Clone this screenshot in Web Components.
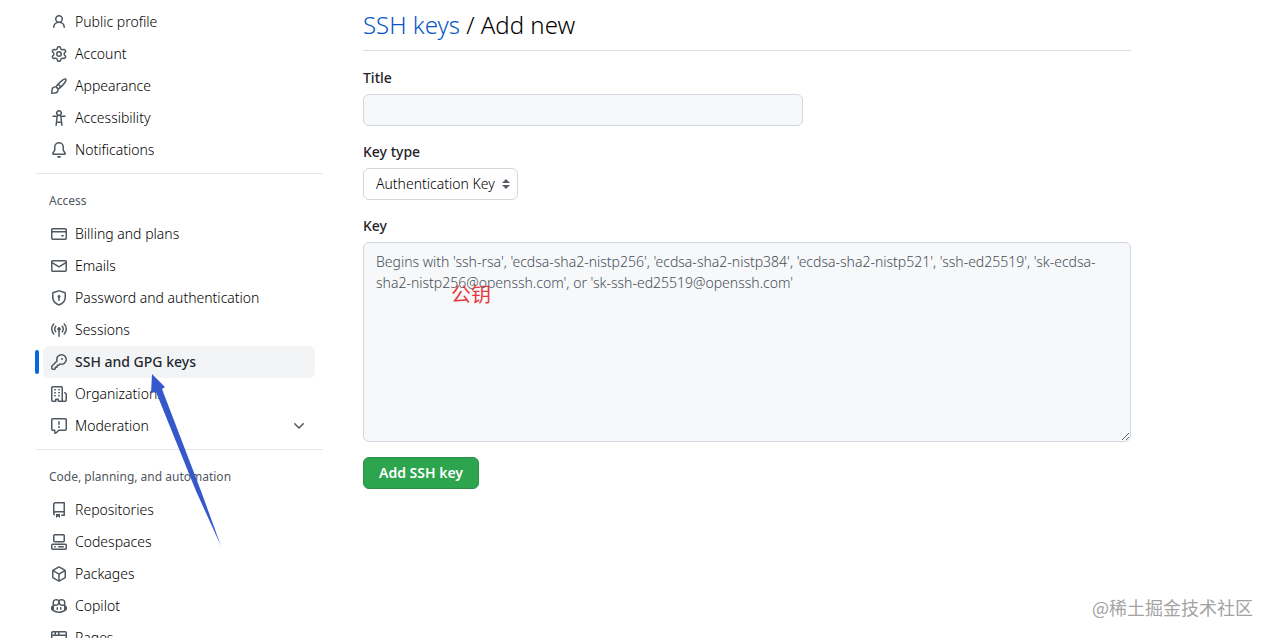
<!DOCTYPE html>
<html lang="en">
<head>
<meta charset="utf-8">
<title>Add new SSH keys</title>
<style>
  html, body { margin: 0; }
  body { background: #fff; color: #1f2328; font: 300 14px/21px "Noto Sans", "Noto Sans CJK SC", sans-serif; }
</style>
</head>
<body>
<settings-page>
  <settings-nav slot="nav">
    <nav-group>
      <nav-item icon="person">Public profile</nav-item>
      <nav-item icon="gear">Account</nav-item>
      <nav-item icon="paintbrush">Appearance</nav-item>
      <nav-item icon="accessibility">Accessibility</nav-item>
      <nav-item icon="bell">Notifications</nav-item>
    </nav-group>
    <nav-group heading="Access">
      <nav-item icon="card">Billing and plans</nav-item>
      <nav-item icon="mail">Emails</nav-item>
      <nav-item icon="shield">Password and authentication</nav-item>
      <nav-item icon="broadcast">Sessions</nav-item>
      <nav-item icon="key" current>SSH and GPG keys</nav-item>
      <nav-item icon="organization">Organizations</nav-item>
      <nav-item icon="report" expandable>Moderation</nav-item>
    </nav-group>
    <nav-group heading="Code, planning, and automation">
      <nav-item icon="repo">Repositories</nav-item>
      <nav-item icon="codespaces">Codespaces</nav-item>
      <nav-item icon="package">Packages</nav-item>
      <nav-item icon="copilot">Copilot</nav-item>
      <nav-item icon="browser">Pages</nav-item>
    </nav-group>
  </settings-nav>
  <page-heading><a href="#keys" slot="parent">SSH keys</a>Add new</page-heading>
  <key-form></key-form>
  <pointer-arrow slot="notes"></pointer-arrow>
  <red-note slot="notes">公钥</red-note>
  <water-mark slot="notes">@稀土掘金技术社区</water-mark>
</settings-page>

<script>
const ICONS = {
  person: "M10.561 8.073a6.005 6.005 0 0 1 3.432 5.142.75.75 0 1 1-1.498.07 4.5 4.5 0 0 0-8.99 0 .75.75 0 0 1-1.498-.07 6.004 6.004 0 0 1 3.431-5.142 3.999 3.999 0 1 1 5.123 0ZM10.5 5a2.5 2.5 0 1 0-5 0 2.5 2.5 0 0 0 5 0Z",
  gear: "M8 0a8.2 8.2 0 0 1 .701.031C9.444.095 9.99.645 10.16 1.29l.288 1.107c.018.066.079.158.212.224.231.114.454.243.668.386.123.082.233.09.299.071l1.103-.303c.644-.176 1.392.021 1.82.63.27.385.506.792.704 1.218.315.675.111 1.422-.364 1.891l-.814.806c-.049.048-.098.147-.088.294.016.257.016.515 0 .772-.01.147.038.246.088.294l.814.806c.475.469.679 1.216.364 1.891a7.977 7.977 0 0 1-.704 1.217c-.428.61-1.176.807-1.82.63l-1.102-.302c-.067-.019-.177-.011-.3.071a5.909 5.909 0 0 1-.668.386c-.133.066-.194.158-.211.224l-.29 1.106c-.168.646-.715 1.196-1.458 1.26a8.006 8.006 0 0 1-1.402 0c-.743-.064-1.289-.614-1.458-1.26l-.289-1.106c-.018-.066-.079-.158-.212-.224a5.738 5.738 0 0 1-.668-.386c-.123-.082-.233-.09-.299-.071l-1.103.303c-.644.176-1.392-.021-1.82-.63a8.12 8.12 0 0 1-.704-1.218c-.315-.675-.111-1.422.363-1.891l.815-.806c.05-.048.098-.147.088-.294a6.214 6.214 0 0 1 0-.772c.01-.147-.038-.246-.088-.294l-.815-.806C.635 6.045.431 5.298.746 4.623a7.92 7.92 0 0 1 .704-1.217c.428-.61 1.176-.807 1.82-.63l1.102.302c.067.019.177.011.3-.071.214-.143.437-.272.668-.386.133-.066.194-.158.211-.224l.29-1.106C6.009.645 6.556.095 7.299.03 7.53.01 7.764 0 8 0Zm-.571 1.525c-.036.003-.108.036-.137.146l-.289 1.105c-.147.561-.549.967-.998 1.189-.173.086-.34.183-.5.29-.417.278-.97.423-1.529.27l-1.103-.303c-.109-.03-.175.016-.195.045-.22.312-.412.644-.573.99-.014.031-.021.11.059.19l.815.806c.411.406.562.957.53 1.456a4.709 4.709 0 0 0 0 .582c.032.499-.119 1.05-.53 1.456l-.815.806c-.081.08-.073.159-.059.19.162.346.353.677.573.989.02.03.085.076.195.046l1.102-.303c.56-.153 1.113-.008 1.53.27.161.107.328.204.501.29.447.222.85.629.997 1.189l.289 1.105c.029.109.101.143.137.146a6.6 6.6 0 0 0 1.142 0c.036-.003.108-.036.137-.146l.289-1.105c.147-.561.549-.967.998-1.189.173-.086.34-.183.5-.29.417-.278.97-.423 1.529-.27l1.103.303c.109.029.175-.016.195-.045.22-.313.411-.644.573-.99.014-.031.021-.11-.059-.19l-.815-.806c-.411-.406-.562-.957-.53-1.456a4.709 4.709 0 0 0 0-.582c-.032-.499.119-1.05.53-1.456l.815-.806c.081-.08.073-.159.059-.19a6.464 6.464 0 0 0-.573-.989c-.02-.03-.085-.076-.195-.046l-1.102.303c-.56.153-1.113.008-1.53-.27a4.44 4.44 0 0 0-.501-.29c-.447-.222-.85-.629-.997-1.189l-.289-1.105c-.029-.11-.101-.143-.137-.146a6.6 6.6 0 0 0-1.142 0ZM11 8a3 3 0 1 1-6 0 3 3 0 0 1 6 0ZM9.5 8a1.5 1.5 0 1 0-3.001.001A1.5 1.5 0 0 0 9.5 8Z",
  paintbrush: "M11.134 1.535c.7-.509 1.416-.942 2.076-1.155.649-.21 1.463-.267 2.069.34.603.601.568 1.411.368 2.07-.202.668-.624 1.39-1.125 2.096-1.011 1.424-2.496 2.987-3.775 4.249-1.098 1.084-2.132 1.839-3.04 2.3a3.744 3.744 0 0 1-1.055 3.217c-.431.431-1.065.691-1.657.861-.614.177-1.294.287-1.914.357A21.151 21.151 0 0 1 .797 16H.743l.007-.75H.749L.742 16a.75.75 0 0 1-.743-.742l.743-.008-.742.007v-.054a21.25 21.25 0 0 1 .13-2.284c.067-.647.187-1.287.358-1.914.17-.591.43-1.226.86-1.657a3.746 3.746 0 0 1 3.227-1.054c.466-.893 1.225-1.907 2.314-2.982 1.271-1.255 2.833-2.75 4.246-3.777ZM1.62 13.089c-.051.464-.086.929-.104 1.395.466-.018.932-.053 1.396-.104a10.511 10.511 0 0 0 1.668-.309c.526-.151.856-.325 1.011-.48a2.25 2.25 0 1 0-3.182-3.182c-.155.155-.329.485-.48 1.01a10.515 10.515 0 0 0-.309 1.67Zm10.396-10.34c-1.224.89-2.605 2.189-3.822 3.384l1.718 1.718c1.21-1.205 2.51-2.597 3.387-3.833.47-.662.78-1.227.912-1.662.134-.444.032-.551.009-.575h-.001V1.78c-.014-.014-.113-.113-.548.027-.432.14-.995.462-1.655.942Zm-4.832 7.266-.001.001a9.859 9.859 0 0 0 1.63-1.142L7.155 7.216a9.7 9.7 0 0 0-1.161 1.607c.482.302.889.71 1.19 1.192Z",
  accessibility: "M9.923 5.302c.063.063.122.129.178.198H14A.75.75 0 0 1 14 7h-3.3l.578 5.163.362 2.997a.75.75 0 0 1-1.49.18L9.868 13H6.132l-.282 2.34a.75.75 0 0 1-1.49-.18l.362-2.997L5.3 7H2a.75.75 0 0 1 0-1.5h3.9a2.54 2.54 0 0 1 .176-.198 3 3 0 1 1 3.847 0ZM9.2 7.073h-.001a1.206 1.206 0 0 0-2.398 0L6.305 11.5h3.39ZM9.5 3a1.5 1.5 0 1 0-3 0 1.5 1.5 0 0 0 3 0Z",
  bell: "M8 16a2 2 0 0 0 1.985-1.75c.017-.137-.097-.25-.235-.25h-3.5c-.138 0-.252.113-.235.25A2 2 0 0 0 8 16ZM3 5a5 5 0 0 1 10 0v2.947c0 .05.015.098.042.139l1.703 2.555A1.519 1.519 0 0 1 13.482 13H2.518a1.516 1.516 0 0 1-1.263-2.36l1.703-2.554A.255.255 0 0 0 3 7.947Zm5-3.5A3.5 3.5 0 0 0 4.5 5v2.947c0 .346-.102.683-.294.97l-1.703 2.556a.017.017 0 0 0-.003.01l.001.006c0 .002.002.004.004.006l.006.004.007.001h10.964l.007-.001.006-.004.004-.006.001-.007a.017.017 0 0 0-.003-.01l-1.703-2.554a1.745 1.745 0 0 1-.294-.97V5A3.5 3.5 0 0 0 8 1.5Z",
  card: "M10.75 9a.75.75 0 0 0 0 1.5h1.5a.75.75 0 0 0 0-1.5h-1.5ZM0 3.75C0 2.784.784 2 1.75 2h12.5c.966 0 1.75.784 1.75 1.75v8.5A1.75 1.75 0 0 1 14.25 14H1.75A1.75 1.75 0 0 1 0 12.25ZM14.5 6.5h-13v5.75c0 .138.112.25.25.25h12.5a.25.25 0 0 0 .25-.25Zm0-2.75a.25.25 0 0 0-.25-.25H1.75a.25.25 0 0 0-.25.25V5h13Z",
  mail: "M1.75 2h12.5c.966 0 1.75.784 1.75 1.75v8.5A1.75 1.75 0 0 1 14.25 14H1.75A1.75 1.75 0 0 1 0 12.25v-8.5C0 2.784.784 2 1.75 2ZM1.5 12.251c0 .138.112.25.25.25h12.5a.25.25 0 0 0 .25-.25V5.809L8.38 9.397a.75.75 0 0 1-.76 0L1.5 5.809v6.442Zm13-8.181v-.32a.25.25 0 0 0-.25-.25H1.75a.25.25 0 0 0-.25.25v.32L8 7.88Z",
  shield: "m8.533.133 5.25 1.68A1.75 1.75 0 0 1 15 3.48V7c0 1.566-.32 3.182-1.303 4.682-.983 1.498-2.585 2.813-5.032 3.855a1.697 1.697 0 0 1-1.33 0c-2.447-1.042-4.049-2.357-5.032-3.855C1.32 10.182 1 8.566 1 7V3.48a1.75 1.75 0 0 1 1.217-1.667l5.25-1.68a1.748 1.748 0 0 1 1.066 0Zm-.61 1.429.001.001-5.25 1.68a.251.251 0 0 0-.174.237V7c0 1.36.275 2.666 1.057 3.859.784 1.194 2.121 2.342 4.366 3.298a.196.196 0 0 0 .154 0c2.245-.957 3.582-2.103 4.366-3.297C13.225 9.666 13.5 8.358 13.5 7V3.48a.25.25 0 0 0-.174-.238l-5.25-1.68a.25.25 0 0 0-.153 0ZM9.5 6.5c0 .536-.286 1.032-.75 1.3v2.45a.75.75 0 0 1-1.5 0V7.8A1.5 1.5 0 1 1 9.5 6.5Z",
  broadcast: "M8.75 8.582v5.668a.75.75 0 0 1-1.5 0V8.582a1.75 1.75 0 1 1 1.5 0Zm3.983-7.125a.75.75 0 0 1 1.06.026A7.976 7.976 0 0 1 16 7c0 2.139-.84 4.083-2.207 5.517a.75.75 0 1 1-1.086-1.034A6.474 6.474 0 0 0 14.5 7a6.474 6.474 0 0 0-1.793-4.483.75.75 0 0 1 .026-1.06Zm-9.466 0c.3.286.312.76.026 1.06A6.474 6.474 0 0 0 1.5 7a6.47 6.47 0 0 0 1.793 4.483.75.75 0 0 1-1.086 1.034A7.973 7.973 0 0 1 0 7c0-2.139.84-4.083 2.207-5.517a.75.75 0 0 1 1.06-.026Zm8.556 2.321A4.988 4.988 0 0 1 13 7a4.988 4.988 0 0 1-1.177 3.222.75.75 0 1 1-1.146-.967A3.487 3.487 0 0 0 11.5 7c0-.86-.309-1.645-.823-2.255a.75.75 0 0 1 1.146-.967Zm-6.492.958A3.48 3.48 0 0 0 4.5 7a3.48 3.48 0 0 0 .823 2.255.75.75 0 0 1-1.146.967A4.981 4.981 0 0 1 3 7a4.982 4.982 0 0 1 1.188-3.236.75.75 0 1 1 1.143.972Z",
  key: "M10.5 0a5.499 5.499 0 1 1-1.288 10.848l-.932.932a.749.749 0 0 1-.53.22H7v.75a.749.749 0 0 1-.22.53l-.5.5a.749.749 0 0 1-.53.22H5v.75a.749.749 0 0 1-.22.53l-.5.5a.749.749 0 0 1-.53.22h-2A1.75 1.75 0 0 1 0 14.25v-2c0-.199.079-.389.22-.53l4.932-4.932A5.5 5.5 0 0 1 10.5 0Zm-4 5.5c-.001.431.069.86.205 1.269a.75.75 0 0 1-.181.768L1.5 12.56v1.69c0 .138.112.25.25.25h1.69l.06-.06v-1.19a.75.75 0 0 1 .75-.75h1.19l.06-.06v-1.19a.75.75 0 0 1 .75-.75h1.19l1.023-1.025a.75.75 0 0 1 .768-.18A4 4 0 1 0 6.5 5.5ZM11 6a1 1 0 1 1 0-2 1 1 0 0 1 0 2Z",
  organization: "M1.75 16A1.75 1.75 0 0 1 0 14.25V1.75C0 .784.784 0 1.75 0h8.5C11.216 0 12 .784 12 1.75v12.5c0 .085-.006.168-.018.25h2.268a.25.25 0 0 0 .25-.25V8.285a.25.25 0 0 0-.111-.208l-1.055-.703a.749.749 0 1 1 .832-1.248l1.055.703c.487.325.779.871.779 1.456v5.965A1.75 1.75 0 0 1 14.25 16h-3.5a.766.766 0 0 1-.197-.026c-.099.017-.2.026-.303.026h-3a.75.75 0 0 1-.75-.75V14h-1v1.25a.75.75 0 0 1-.75.75Zm-.25-1.75c0 .138.112.25.25.25H4v-1.25a.75.75 0 0 1 .75-.75h2.5a.75.75 0 0 1 .75.75v1.25h2.25a.25.25 0 0 0 .25-.25V1.75a.25.25 0 0 0-.25-.25h-8.5a.25.25 0 0 0-.25.25ZM3.75 6h.5a.75.75 0 0 1 0 1.5h-.5a.75.75 0 0 1 0-1.5ZM3 3.75A.75.75 0 0 1 3.75 3h.5a.75.75 0 0 1 0 1.5h-.5A.75.75 0 0 1 3 3.75Zm4 3A.75.75 0 0 1 7.75 6h.5a.75.75 0 0 1 0 1.5h-.5A.75.75 0 0 1 7 6.75ZM7.75 3h.5a.75.75 0 0 1 0 1.5h-.5a.75.75 0 0 1 0-1.5ZM3 9.75A.75.75 0 0 1 3.75 9h.5a.75.75 0 0 1 0 1.5h-.5A.75.75 0 0 1 3 9.75ZM7.75 9h.5a.75.75 0 0 1 0 1.5h-.5a.75.75 0 0 1 0-1.5Z",
  report: "M0 1.75C0 .784.784 0 1.75 0h12.5C15.216 0 16 .784 16 1.75v9.5A1.75 1.75 0 0 1 14.25 13H8.06l-2.573 2.573A1.458 1.458 0 0 1 3 14.543V13H1.75A1.75 1.75 0 0 1 0 11.25Zm1.75-.25a.25.25 0 0 0-.25.25v9.5c0 .138.112.25.25.25h2a.75.75 0 0 1 .75.75v2.19l2.72-2.72a.749.749 0 0 1 .53-.22h6.5a.25.25 0 0 0 .25-.25v-9.5a.25.25 0 0 0-.25-.25Zm7 2.25v2.5a.75.75 0 0 1-1.5 0v-2.5a.75.75 0 0 1 1.5 0ZM9 9a1 1 0 1 1-2 0 1 1 0 0 1 2 0Z",
  chevron: "M12.78 5.22a.749.749 0 0 1 0 1.06l-4.25 4.25a.749.749 0 0 1-1.06 0L3.22 6.28a.749.749 0 1 1 1.06-1.06L8 8.939l3.72-3.719a.749.749 0 0 1 1.06 0Z",
  repo: "M2 2.5A2.5 2.5 0 0 1 4.5 0h8.75a.75.75 0 0 1 .75.75v12.5a.75.75 0 0 1-.75.75h-2.5a.75.75 0 0 1 0-1.5h1.75v-2h-8a1 1 0 0 0-.714 1.7.75.75 0 1 1-1.072 1.05A2.495 2.495 0 0 1 2 11.5Zm10.5-1h-8a1 1 0 0 0-1 1v6.708A2.486 2.486 0 0 1 4.5 9h8ZM5 12.25a.25.25 0 0 1 .25-.25h3.5a.25.25 0 0 1 .25.25v3.25a.25.25 0 0 1-.4.2l-1.45-1.087a.249.249 0 0 0-.3 0L5.4 15.7a.25.25 0 0 1-.4-.2Z",
  codespaces: "M0 11.25c0-.966.784-1.75 1.75-1.75h12.5c.966 0 1.75.784 1.75 1.75v3A1.75 1.75 0 0 1 14.25 16H1.75A1.75 1.75 0 0 1 0 14.25Zm2-9.5C2 .784 2.784 0 3.75 0h8.5C13.216 0 14 .784 14 1.75v5a1.75 1.75 0 0 1-1.75 1.75h-8.5A1.75 1.75 0 0 1 2 6.75Zm1.75-.25a.25.25 0 0 0-.25.25v5c0 .138.112.25.25.25h8.5a.25.25 0 0 0 .25-.25v-5a.25.25 0 0 0-.25-.25Zm-2 9.5a.25.25 0 0 0-.25.25v3c0 .138.112.25.25.25h12.5a.25.25 0 0 0 .25-.25v-3a.25.25 0 0 0-.25-.25ZM7 12.75a.75.75 0 0 1 .75-.75h4.5a.75.75 0 0 1 0 1.5h-4.5a.75.75 0 0 1-.75-.75Zm-4 0a.75.75 0 0 1 .75-.75h.5a.75.75 0 0 1 0 1.5h-.5a.75.75 0 0 1-.75-.75Z",
  package: "m8.878.392 5.25 3.045c.54.314.872.89.872 1.514v6.098a1.75 1.75 0 0 1-.872 1.514l-5.25 3.045a1.75 1.75 0 0 1-1.756 0l-5.25-3.045A1.75 1.75 0 0 1 1 11.049V4.951c0-.624.332-1.201.872-1.514L7.122.392a1.75 1.75 0 0 1 1.756 0ZM7.875 1.69l-4.63 2.685L8 7.133l4.755-2.758-4.63-2.685a.248.248 0 0 0-.25 0ZM2.5 5.677v5.372c0 .09.047.171.125.216l4.625 2.683V8.432Zm6.25 8.271 4.625-2.683a.25.25 0 0 0 .125-.216V5.677L8.75 8.432Z",
  copilot: "M7.998 15.035c-4.562 0-7.873-2.914-7.998-3.749V9.338c.085-.628.677-1.686 1.588-2.065.013-.07.024-.143.036-.218.029-.183.06-.384.126-.612-.201-.508-.254-1.084-.254-1.656 0-.87.128-1.769.693-2.484.579-.733 1.494-1.124 2.724-1.261 1.206-.134 2.262.034 2.944.765.05.053.096.108.139.165.044-.057.094-.112.143-.165.682-.731 1.738-.899 2.944-.765 1.23.137 2.145.528 2.724 1.261.566.715.693 1.614.693 2.484 0 .572-.053 1.148-.254 1.656.066.228.098.429.126.612.012.076.024.148.037.218.924.385 1.522 1.471 1.591 2.095v1.872c0 .766-3.351 3.795-8.002 3.795Zm0-1.485c2.28 0 4.584-1.11 5.002-1.433V7.862l-.023-.116c-.49.21-1.075.291-1.727.291-1.146 0-2.059-.327-2.71-.991A3.222 3.222 0 0 1 8 6.303a3.24 3.24 0 0 1-.544.743c-.65.664-1.563.991-2.71.991-.652 0-1.236-.081-1.727-.291l-.023.116v4.255c.419.323 2.722 1.433 5.002 1.433ZM6.762 2.83c-.193-.206-.637-.413-1.682-.297-1.019.113-1.479.404-1.713.7-.247.312-.369.789-.369 1.554 0 .793.129 1.171.308 1.371.162.181.519.379 1.442.379.853 0 1.339-.235 1.638-.54.315-.322.527-.827.617-1.553.117-.935-.037-1.395-.241-1.614Zm4.155-.297c-1.044-.116-1.488.091-1.681.297-.204.219-.359.679-.242 1.614.091.726.303 1.231.618 1.553.299.305.784.54 1.638.54.922 0 1.28-.198 1.442-.379.179-.2.308-.578.308-1.371 0-.765-.123-1.242-.37-1.554-.233-.296-.693-.587-1.713-.7ZM6.25 9.037a.75.75 0 0 1 .75.75v1.501a.75.75 0 0 1-1.5 0V9.787a.75.75 0 0 1 .75-.75Zm4.25.75v1.501a.75.75 0 0 1-1.5 0V9.787a.75.75 0 0 1 1.5 0Z",
  browser: "M0 2.75C0 1.784.784 1 1.75 1h12.5c.966 0 1.75.784 1.75 1.75v10.5A1.75 1.75 0 0 1 14.25 15H1.75A1.75 1.75 0 0 1 0 13.25ZM14.5 6h-13v7.25c0 .138.112.25.25.25h12.5a.25.25 0 0 0 .25-.25Zm-6-3.5v2h6V2.75a.25.25 0 0 0-.25-.25ZM5 2.5v2h2v-2Zm-3.25 0a.25.25 0 0 0-.25.25V4.5h2v-2Z"
};
const icon = name => `<svg viewBox="0 0 16 16" width="16" height="16" fill="currentColor" fill-rule="evenodd" aria-hidden="true"><path d="${ICONS[name]}"/></svg>`;

function define(tag, render) {
  customElements.define(tag, class extends HTMLElement {
    constructor() { super(); this.attachShadow({ mode: "open" }); }
    connectedCallback() { this.shadowRoot.innerHTML = render(this); }
  });
}

define("settings-page", () => `
  <style>
    :host { display: block; position: relative; height: 100vh; overflow: hidden; }
    .layout { display: grid; grid-template-columns: 288px minmax(0, 1fr); column-gap: 40px; padding: 6px 141px 0 35px; }
  </style>
  <div class="layout"><slot name="nav"></slot><main><slot></slot></main></div>
  <slot name="notes"></slot>`);

define("settings-nav", () => `
  <style>:host { display: block; } nav { display: flex; flex-direction: column; }</style>
  <nav aria-label="Settings"><slot></slot></nav>`);

define("nav-group", el => {
  const heading = el.getAttribute("heading");
  return `
  <style>
    :host { display: block; }
    section { padding: 0 8px; }
    hr { margin: 7px 0 0 1px; border: 0; height: 1px; background: #e3e6ea; }
    h3 { margin: 0; padding: 18px 6px 8px; font-size: 12px; line-height: 18px; font-weight: 400; color: #4f5761; }
  </style>
  ${heading ? "<hr>" : ""}
  <section>${heading ? `<h3>${heading}</h3>` : ""}<slot></slot></section>`;
});

define("nav-item", el => {
  const current = el.hasAttribute("current");
  const tag = el.hasAttribute("expandable") ? "button type=\"button\" aria-expanded=\"false\"" : `a href="#${el.getAttribute("icon")}"`;
  return `
  <style>
    :host { display: block; color: #000; }
    a, button { position: relative; display: flex; align-items: center; gap: 8px; box-sizing: border-box; width: 100%; height: 32px; padding: 0 8px; border: 0; border-radius: 6px; background: none; color: inherit; font: inherit; text-align: left; text-decoration: none; }
    span { flex: 1; padding-bottom: 2px; }
    svg { flex: none; color: #505860; }
    [aria-current] { background: #f3f4f6; color: #24292f; font-weight: 500; }
    [aria-current]::before { content: ""; position: absolute; left: -8px; top: 4px; width: 4px; height: 24px; border-radius: 2px; background: #0969da; }
  </style>
  <${tag}${current ? ' aria-current="page"' : ""}>${icon(el.getAttribute("icon"))}<span><slot></slot></span>${el.hasAttribute("expandable") ? icon("chevron") : ""}</${tag.split(" ")[0]}>`;
});

define("page-heading", () => `
  <style>
    :host { display: block; border-bottom: 1px solid #d8dee4; padding: 1px 0 7px; margin-bottom: 16px; }
    h1 { margin: 0; font-size: 24px; line-height: 36px; font-weight: 300; color: #000; }
    ::slotted(a) { color: #0757c4; text-decoration: none; }
  </style>
  <h1><slot name="parent"></slot> / <slot></slot></h1>`);

define("key-form", () => `
  <style>
    :host { display: block; }
    form { display: flex; flex-direction: column; align-items: flex-start; gap: 15px; }
    .field { width: 100%; }
    label { display: block; margin-bottom: 6px; font-weight: 500; line-height: 21px; }
    input, textarea, select { display: block; box-sizing: border-box; margin: 0; border: 1px solid #d0d7de; border-radius: 6px; font: inherit; color: #000; }
    input { width: 440px; max-width: 100%; height: 32px; padding: 5px 12px; background: #f6f8fa; }
    .pick { position: relative; width: max-content; }
    select { appearance: none; height: 32px; padding: 0 22px 2px 12px; background: #fff; }
    .pick svg { position: absolute; right: 8px; top: 11px; color: #57606a; }
    textarea { width: 100%; height: 200px; padding: 8px 12px; background: #f6f8fa; resize: vertical; }
    textarea::placeholder { color: #474e57; opacity: 1; }
    button { height: 32px; padding: 0 15px 2px; border: 1px solid #2a9147; border-radius: 6px; background: #2da44e; color: #fff; font: inherit; font-weight: 600; }
  </style>
  <form>
    <div class="field"><label for="title">Title</label><input id="title" type="text"></div>
    <div class="field"><label for="type">Key type</label>
      <div class="pick">
        <select id="type"><option>Authentication Key</option><option>Signing Key</option></select>
        <svg width="8" height="10" viewBox="0 0 8 10" fill="currentColor" aria-hidden="true"><path d="M4 0l4 4H0zM0 6h8L4 10z"/></svg>
      </div>
    </div>
    <div class="field"><label for="key">Key</label>
      <textarea id="key" placeholder="Begins with 'ssh-rsa', 'ecdsa-sha2-nistp256', 'ecdsa-sha2-nistp384', 'ecdsa-sha2-nistp521', 'ssh-ed25519', 'sk-ecdsa-sha2-nistp256@openssh.com', or 'sk-ssh-ed25519@openssh.com'"></textarea>
    </div>
    <button type="button">Add SSH key</button>
  </form>`);

define("pointer-arrow", () => `
  <style>:host { position: absolute; left: 150px; top: 374px; pointer-events: none; } svg { display: block; }</style>
  <svg width="72" height="173" viewBox="0 0 72 173" aria-hidden="true"><path fill="#3558cb" d="M2 0L15 13L12 15L51 117L71 172L46 117L6 18L1 19Z"/></svg>`);

define("red-note", () => `
  <style>:host { position: absolute; left: 451px; top: 281px; font-size: 20px; line-height: 28px; font-weight: 400; color: #e8393c; pointer-events: none; }</style>
  <slot></slot>`);

define("water-mark", () => `
  <style>:host { position: absolute; right: 19px; bottom: 17px; font: 18px/28px "Noto Sans CJK SC", sans-serif; color: #a3a3a3; pointer-events: none; }</style>
  <slot></slot>`);
</script>
</body>
</html>
